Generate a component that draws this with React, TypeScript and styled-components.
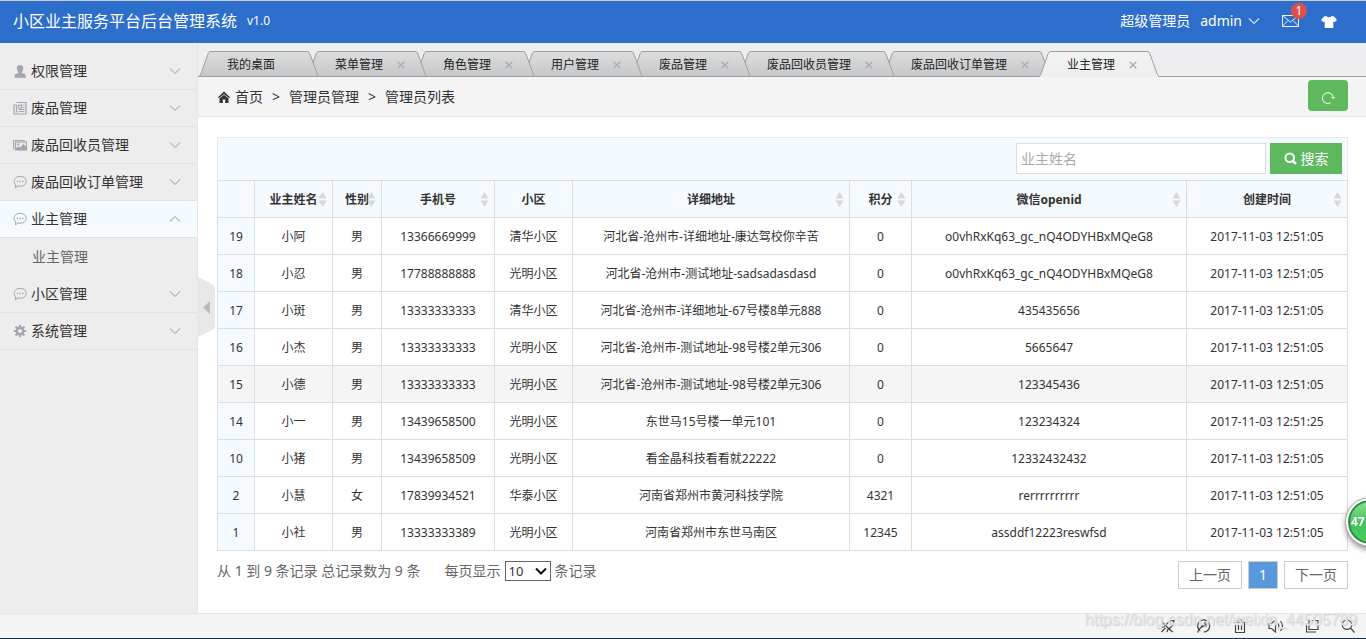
import React from 'react';
import styled, { createGlobalStyle } from 'styled-components';

const Global = createGlobalStyle`
  * { box-sizing: border-box; }
  html, body { margin: 0; padding: 0; }
  body, button, input, select {
    font-family: "Noto Sans", "Noto Sans CJK SC", sans-serif;
    font-size: 14px;
    line-height: 20px;
    color: #333;
  }
  button { padding: 0; border: 0; background: none; cursor: pointer; }
  a { color: inherit; text-decoration: none; }
  svg { display: block; flex: none; }
`;

const Page = styled.div`
  min-height: 100vh;
  display: flex;
  flex-direction: column;
  background: #fff;
`;

const Header = styled.header`
  height: 43px;
  padding: 0 29px 2px 13px;
  border-top: 1px solid #c9ccd0;
  background: #2d6dcc;
  color: #fff;
  display: flex;
  align-items: center;
  justify-content: space-between;
`;

const Brand = styled.h1`
  margin: 0;
  display: flex;
  align-items: center;
  gap: 10px;
  font-size: 16px;
  font-weight: 400;
`;

const Version = styled.small`
  font-size: 12px;
`;

const UserNav = styled.nav`
  display: flex;
  align-items: center;
  gap: 10px;
`;

const UserLink = styled.a`
  display: flex;
  align-items: center;
  gap: 6px;
`;

const MailLink = styled.a`
  position: relative;
  margin: 0 12px;
`;

const Badge = styled.span`
  position: absolute;
  left: 9px;
  top: -12px;
  width: 16px;
  height: 16px;
  border-radius: 8px;
  background: #dd514c;
  font-size: 12px;
  line-height: 16px;
  text-align: center;
`;

const Body = styled.div`
  flex: 1;
  display: flex;
`;

const Sidebar = styled.aside`
  flex: none;
  width: 198px;
  padding-top: 10px;
  border-right: 1px solid #e5e5e5;
  background: #ededed;
`;

const MenuButton = styled.button<{ $open?: boolean }>`
  width: 100%;
  height: 37px;
  padding: 0 16px 0 13px;
  display: flex;
  align-items: center;
  gap: 4px;
  border-bottom: 1px solid #e2e2e2;
  background: ${p => (p.$open ? '#f5faff' : 'transparent')};
  color: #333;
`;

const MenuText = styled.span`
  flex: 1;
  text-align: left;
`;

const SubLink = styled.a`
  display: block;
  height: 38px;
  padding-left: 32px;
  line-height: 38px;
  color: #666;
`;

const Main = styled.main`
  position: relative;
  flex: 1;
  min-width: 0;
`;

const Collapse = styled.button`
  position: absolute;
  left: 0;
  top: 234px;
  width: 17px;
  height: 61px;
`;

const TabBar = styled.div`
  height: 34px;
  padding: 8px 0 0 1px;
  display: flex;
  isolation: isolate;
  background: linear-gradient(#9c9fa2, #9c9fa2) bottom / 100% 1px no-repeat, #eeeef0;
`;

const Tab = styled.div<{ $z: number }>`
  position: relative;
  z-index: ${p => p.$z};
  display: flex;
  margin-right: -12px;
`;

const TabBody = styled.div<{ $active?: boolean }>`
  height: 26px;
  padding: ${p => (p.$active ? '0' : '1px')} 4px 0 16px;
  min-width: 96px;
  display: flex;
  align-items: center;
  gap: 10px;
  border-top: 1px solid #9c9fa2;
  border-bottom: ${p => (p.$active ? '0' : '1px solid #9c9fa2')};
  background: ${p => (p.$active ? 'linear-gradient(#f1f3f2, #eeeef0)' : 'linear-gradient(#dcdedd, #c6c7c9)')};
  font-size: 12px;
  color: #222;
`;

const Close = styled.button`
  width: 18px;
  height: 16px;
  padding-right: 2px;
  display: flex;
  align-items: center;
  justify-content: center;
`;

const Crumbs = styled.nav`
  height: 40px;
  padding: 0 18px 0 20px;
  display: flex;
  align-items: center;
  gap: 5px;
  border-bottom: 1px solid #e5e5e5;
  background: #f4f4f4;
`;

const CrumbSep = styled.span`
  width: 16px;
  text-align: center;
`;

const Refresh = styled.button`
  width: 40px;
  height: 31px;
  margin: 0 0 2px auto;
  padding-top: 4px;
  display: flex;
  align-items: center;
  justify-content: center;
  border-radius: 4px;
  background: #5eb95e;
`;

const Content = styled.section`
  padding: 20px 18px 24px 19px;
`;

const SearchBar = styled.form`
  height: 43px;
  padding: 0 5px 1px;
  display: flex;
  align-items: center;
  justify-content: flex-end;
  gap: 4px;
  border: 1px solid #e8ebed;
  border-bottom: 0;
  background: #f5faff;
`;

const SearchInput = styled.input`
  width: 250px;
  height: 31px;
  padding: 0 4px;
  border: 1px solid #ddd;
  border-radius: 0;
  background: #fff;
  &::placeholder { color: #aaa; opacity: 1; }
`;

const SearchButton = styled.button`
  width: 72px;
  height: 31px;
  display: flex;
  align-items: center;
  justify-content: center;
  gap: 4px;
  background: #5eb95e;
  color: #fff;
`;

const Table = styled.table`
  width: 100%;
  table-layout: fixed;
  border-collapse: collapse;
  font-size: 12px;
  text-align: center;
`;

const Col = styled.col<{ $w?: number }>`
  width: ${p => (p.$w ? p.$w + 'px' : 'auto')};
`;

const Th = styled.th`
  height: 37px;
  padding: 2px 0 0;
  border: 1px solid #ddd;
  background: #f5faff;
  font-weight: 700;
`;

const HeadCell = styled.div`
  position: relative;
`;

const SortIcon = styled.svg`
  position: absolute;
  right: 5px;
  top: 2px;
`;

const Td = styled.td<{ $tint?: boolean }>`
  height: 37px;
  padding: 2px 0 0;
  border: 1px solid #ddd;
  background: ${p => (p.$tint ? '#f5faff' : 'transparent')};
`;

const Row = styled.tr<{ $hover?: boolean }>`
  background: ${p => (p.$hover ? '#f5f5f5' : '#fff')};
  ${Td} { ${p => (p.$hover ? 'background: #f5f5f5;' : '')} }
`;

const TableFoot = styled.div`
  padding-top: 10px;
  display: flex;
  justify-content: space-between;
  color: #666;
`;

const Summary = styled.div`
  height: 20px;
  display: flex;
  align-items: center;
  gap: 24px;
`;

const PageSize = styled.label`
  display: flex;
  align-items: center;
  gap: 4px;
`;

const SizeBox = styled.span`
  position: relative;
  display: flex;
`;

const SizeSelect = styled.select`
  width: 46px;
  height: 20px;
  padding: 0 3px;
  border: 1px solid #666;
  border-radius: 0;
  background: #fff;
  appearance: none;
  font-size: 13px;
  line-height: 18px;
`;

const SelectArrow = styled.svg`
  position: absolute;
  right: 4px;
  top: 6px;
  pointer-events: none;
`;

const Pager = styled.nav`
  display: flex;
  gap: 6px;
`;

const PageButton = styled.button<{ $current?: boolean }>`
  height: 28px;
  padding: 0 10px;
  border: 1px solid #ccc;
  background: ${p => (p.$current ? '#5a98de' : '#fff')};
  color: ${p => (p.$current ? '#fff' : '#666')};
`;

const Footer = styled.footer`
  position: relative;
  height: 26px;
  padding: 0 10px;
  display: flex;
  align-items: center;
  justify-content: flex-end;
  gap: 20px;
  border-top: 1px solid #e5e5e5;
  border-bottom: 1px solid #1f2d3d;
  background: #f4f4f4;
`;

const ToolButton = styled.button`
  width: 16px;
  height: 16px;
`;

const Watermark = styled.span`
  position: absolute;
  right: 9px;
  top: -4px;
  font-family: "Liberation Sans", sans-serif;
  font-size: 16px;
  line-height: 20px;
  color: #e6e6e6;
  text-shadow: 1px 1px 1px #ccc;
`;

const Bubble = styled.div`
  position: fixed;
  right: -28px;
  top: 498px;
  width: 48px;
  height: 48px;
  padding-left: 3px;
  border: 2px solid #fff;
  border-radius: 50%;
  outline: 1px solid #aaa;
  box-shadow: inset 0 0 0 2px #2b8a4c, 0 3px 6px rgba(0, 0, 0, 0.5);
  background: linear-gradient(#8fe08f, #3fc35a 55%, #4fd05f);
  font-size: 12px;
  font-weight: 700;
  line-height: 44px;
  color: #fff;
`;

const ICON = '#a2a7b0';

const Chevron = ({ up, color = '#bbb' }: { up?: boolean; color?: string }) => (
  <svg width="12" height="8" viewBox="0 0 12 8" fill="none" stroke={color} strokeWidth="1.2">
    <path d={up ? 'M1 6.5 6 1.5 11 6.5' : 'M1 1.5 6 6.5 11 1.5'} />
  </svg>
);

const UserIcon = () => (
  <svg width="14" height="14" viewBox="0 0 14 14" fill={ICON}>
    <path d="M7 1c2.200 0 3.400 1.500 3.300 3.600C10.200 6.400 9.500 7.400 8.800 8.200c0 .7.500 1.100 1.700 1.300 1.700.3 2.300 1 2.400 4.200H1.600C1.700 10.500 2.200 9.800 3.900 9.500c1.200-.2 1.500-.6 1.500-1.300-.7-.8-1.400-1.800-1.500-3.600C3.800 2.500 4.800 1 7 1z" />
  </svg>
);

const NewsIcon = () => (
  <svg width="14" height="14" viewBox="0 0 14 14" fill="none" stroke={ICON} strokeWidth="1.200">
    <path d="M3.500 1.500h9.500v11.500h-12v-9h2.500M3.500 4v7.500" />
    <path d="M5.500 4h3v3h-3zM9.500 4h2M9.500 6.500h2M5.500 8.500h6M5.500 10.500h6" />
  </svg>
);

const ImageIcon = () => (
  <svg width="14" height="14" viewBox="0 0 14 14" fill="none" stroke={ICON}>
    <path d="M.5 11.500v-9h11" />
    <rect x="2.500" y="4" width="11" height="8" strokeWidth="1.200" />
    <circle cx="5.300" cy="6.400" r="1.100" fill={ICON} stroke="none" />
    <path d="M3 11.500V10L5.500 8.500l1.500 1L10.300 6 13.500 9v3H3z" fill={ICON} stroke="none" />
  </svg>
);

const ChatIcon = () => (
  <svg width="14" height="14" viewBox="0 0 14 14" fill="none" stroke={ICON}>
    <path d="M7.300 1.300c3.500 0 5.900 2.100 5.900 5s-2.400 5-5.900 5c-.8 0-1.600-.1-2.300-.4L2.400 13l.4-3C1.700 9 1.100 7.700 1.100 6.300c0-2.900 2.700-5 6.200-5z" />
    <path d="M4 6.500h1.300M6.600 6.500h1.300M9.200 6.500h1.300" strokeWidth="1.300" />
  </svg>
);

const GearIcon = () => (
  <svg width="14" height="14" viewBox="0 0 14 14" fill="none" stroke={ICON}>
    <circle cx="7" cy="7" r="3.200" strokeWidth="2.400" />
    <path d="M7 .8v2.400M7 10.800v2.400M.8 7h2.400M10.800 7h2.400M2.600 2.600l1.700 1.700M9.700 9.700l1.700 1.700M11.400 2.600 9.700 4.300M4.300 9.700l-1.700 1.700" strokeWidth="2.200" />
  </svg>
);

const menus = [
  { label: '权限管理', icon: <UserIcon /> },
  { label: '废品管理', icon: <NewsIcon /> },
  { label: '废品回收员管理', icon: <ImageIcon /> },
  { label: '废品回收订单管理', icon: <ChatIcon /> },
  { label: '业主管理', icon: <ChatIcon />, sub: '业主管理' },
  { label: '小区管理', icon: <ChatIcon /> },
  { label: '系统管理', icon: <GearIcon /> },
];

const tabs = ['我的桌面', '菜单管理', '角色管理', '用户管理', '废品管理', '废品回收员管理', '废品回收订单管理', '业主管理'];

const TabCap = ({ id, active, right }: { id: string; active: boolean; right?: boolean }) => (
  <svg width="12" height="26" viewBox="0 0 12 26">
    <defs>
      <linearGradient id={id} x1="0" y1="0" x2="0" y2="1">
        <stop offset="0" stopColor={active ? '#f1f3f2' : '#dcdedd'} />
        <stop offset="1" stopColor={active ? '#eeeef0' : '#c6c7c9'} />
      </linearGradient>
    </defs>
    <g transform={right ? 'translate(12 0) scale(-1 1)' : undefined}>
      <path d="M12 .5C10.500.5 9.500 1.500 9 3L2 22.500Q1.300 25 0 25.500V26H12z" fill={`url(#${id})`} />
      <path d="M12 .5C10.500.5 9.500 1.500 9 3L2 22.500Q1.300 25 0 25.500" fill="none" stroke="#9c9fa2" />
      {!active && <path d="M0 25.500H12" stroke="#9c9fa2" />}
    </g>
  </svg>
);

const columns = [
  { label: '', w: 37 },
  { label: '业主姓名', w: 78, sort: true },
  { label: '性别', w: 49, sort: true },
  { label: '手机号', w: 113, sort: true },
  { label: '小区', w: 78 },
  { label: '详细地址', sort: true },
  { label: '积分', w: 62, sort: true },
  { label: '微信openid', w: 275, sort: true },
  { label: '创建时间', w: 161, sort: true },
];

const rows = [
  ['19', '小阿', '男', '13366669999', '清华小区', '河北省-沧州市-详细地址-康达驾校你辛苦', '0', 'o0vhRxKq63_gc_nQ4ODYHBxMQeG8', '2017-11-03 12:51:05'],
  ['18', '小忍', '男', '17788888888', '光明小区', '河北省-沧州市-测试地址-sadsadasdasd', '0', 'o0vhRxKq63_gc_nQ4ODYHBxMQeG8', '2017-11-03 12:51:05'],
  ['17', '小斑', '男', '13333333333', '清华小区', '河北省-沧州市-详细地址-67号楼8单元888', '0', '435435656', '2017-11-03 12:51:05'],
  ['16', '小杰', '男', '13333333333', '光明小区', '河北省-沧州市-测试地址-98号楼2单元306', '0', '5665647', '2017-11-03 12:51:05'],
  ['15', '小德', '男', '13333333333', '光明小区', '河北省-沧州市-测试地址-98号楼2单元306', '0', '123345436', '2017-11-03 12:51:05'],
  ['14', '小一', '男', '13439658500', '光明小区', '东世马15号楼一单元101', '0', '123234324', '2017-11-03 12:51:25'],
  ['10', '小猪', '男', '13439658509', '光明小区', '看金晶科技看看就22222', '0', '12332432432', '2017-11-03 12:51:05'],
  ['2', '小慧', '女', '17839934521', '华泰小区', '河南省郑州市黄河科技学院', '4321', 'rerrrrrrrrrr', '2017-11-03 12:51:05'],
  ['1', '小社', '男', '13333333389', '光明小区', '河南省郑州市东世马南区', '12345', 'assddf12223reswfsd', '2017-11-03 12:51:05'],
];

const tools = [
  { name: '加速', d: 'M1.500 14 5.500 10M4 6l6 6M6 8c1-3.500 3.500-5.500 8-5.500C14 6 12 9 8.500 10.500M6.500 6H4L2 3.500M10 9.500v2.500l3 2M10 6l1-1M2 9.500 5 8.500M7 14l1-3' },
  { name: '修复', d: 'M4.200 12.800A6 6 0 1 1 13.700 8a6 6 0 0 1-6 6M1.500 14.500C3 10.500 7 7 13 5M6 9.500 9.500 4M5 8h6' },
  { name: '清理', d: 'M1.500 4.500h13M5.500 4.500v-2.500h5v2.500M3.500 4.500v10h9V4.500M6.500 7v5M9.500 7v5' },
  { name: '声音', d: 'M1 5.500v5h2.500L7.500 14V2L3.500 5.500zM10 5.500q1.700 2.500 0 5M12.500 3q4 5 0 10' },
  { name: '窗口', d: 'M5 2.500h9v9H5zM2.500 5v9h9.500' },
  { name: '缩放', d: 'M7 2a4.700 4.700 0 1 1 0 9.400A4.700 4.700 0 0 1 7 2zM10.500 10 14.500 14.500' },
];

export default function App() {
  return (
    <Page>
      <Global />
      <Header>
        <Brand>小区业主服务平台后台管理系统 <Version>v1.0</Version></Brand>
        <UserNav>
          <span>超级管理员</span>
          <UserLink href="#user">admin <Chevron color="#d5e2f5" /></UserLink>
          <MailLink href="#mail" aria-label="消息">
            <svg width="17" height="12" viewBox="0 0 17 12" fill="none" stroke="#fff">
              <path d="M.5.500h16v11H.5zM.5.500 8.500 7 16.500.5M.5 11 6 5.500M16.500 11 11 5.500" strokeWidth=".9" />
            </svg>
            <Badge>1</Badge>
          </MailLink>
          <a href="#skin" aria-label="换肤">
            <svg width="16" height="13" viewBox="0 0 16 13" fill="#fff">
              <path d="M5 1Q8 3.500 11 1L13 1.500 16 5 13.500 7.200 12.300 6.200V13H3.700V6.200L2.500 7.200 0 5 3 1.500z" />
            </svg>
          </a>
        </UserNav>
      </Header>
      <Body>
        <Sidebar>
          {menus.map(m => (
            <React.Fragment key={m.label}>
              <MenuButton $open={!!m.sub}>
                {m.icon}
                <MenuText>{m.label}</MenuText>
                <Chevron up={!!m.sub} />
              </MenuButton>
              {m.sub && <SubLink href="#owners">{m.sub}</SubLink>}
            </React.Fragment>
          ))}
        </Sidebar>
        <Main>
          <TabBar>
            {tabs.map((t, i) => {
              const active = i === tabs.length - 1;
              return (
                <Tab key={t} $z={active ? 20 : 10 - i}>
                  <TabCap id={`l${i}`} active={active} />
                  <TabBody $active={active}>
                    <span>{t}</span>
                    {i > 0 && (
                      <Close aria-label="关闭">
                        <svg width="8" height="8" viewBox="0 0 8 8" stroke="#a9adb3" strokeWidth="1.400">
                          <path d="M.7.700 7.300 7.300M7.300.700.7 7.300" />
                        </svg>
                      </Close>
                    )}
                  </TabBody>
                  <TabCap id={`r${i}`} active={active} right />
                </Tab>
              );
            })}
          </TabBar>
          <Crumbs>
            <svg width="12" height="12" viewBox="0 0 12 12" fill="#333">
              <path d="M6 .5 12 6.200l-.9 1.100L6 2.900.9 7.300 0 6.200z" />
              <path d="M6 3.700 10.500 7.600V12H7.200V8.500H4.800V12H1.500V7.600z" />
            </svg>
            <a href="#home">首页</a>
            <CrumbSep>&gt;</CrumbSep>
            <span>管理员管理</span>
            <CrumbSep>&gt;</CrumbSep>
            <span>管理员列表</span>
            <Refresh aria-label="刷新">
              <svg width="14" height="14" viewBox="0 0 14 14" fill="none" stroke="#fff">
                <path d="M9.500 11.800A5.400 5.400 0 1 1 12.200 7" />
                <path d="M10.500 6 12.200 7.700 13.800 6" />
              </svg>
            </Refresh>
          </Crumbs>
          <Content>
            <SearchBar>
              <SearchInput aria-label="业主姓名" placeholder="业主姓名" />
              <SearchButton type="button">
                <svg width="13" height="13" viewBox="0 0 13 13" fill="none" stroke="#fff" strokeWidth="2">
                  <circle cx="5.700" cy="5.700" r="4.300" />
                  <path d="M8.800 8.800 12 12" strokeWidth="2.400" />
                </svg>
                搜索
              </SearchButton>
            </SearchBar>
            <Table>
              <colgroup>{columns.map((c, i) => <Col key={i} $w={c.w} />)}</colgroup>
              <thead>
                <tr>
                  {columns.map((c, i) => (
                    <Th key={i} scope="col">
                      <HeadCell>
                        {c.label}
                        {c.sort && (
                          <SortIcon width="9" height="15" viewBox="0 0 9 15" fill="#d8d8d8">
                            <path d="M4.500 0 8.500 6.500H.5zM.5 8.500h8L4.500 15z" />
                          </SortIcon>
                        )}
                      </HeadCell>
                    </Th>
                  ))}
                </tr>
              </thead>
              <tbody>
                {rows.map(r => (
                  <Row key={r[0]} $hover={r[0] === '15'}>
                    {r.map((v, i) => <Td key={i} $tint={i === 0}>{v}</Td>)}
                  </Row>
                ))}
              </tbody>
            </Table>
            <TableFoot>
              <Summary>
                <span>从 1 到 9 条记录 总记录数为 9 条</span>
                <PageSize>
                  每页显示
                  <SizeBox>
                    <SizeSelect defaultValue="10"><option>10</option><option>25</option></SizeSelect>
                    <SelectArrow width="12" height="8" viewBox="0 0 12 8" fill="none" stroke="#111" strokeWidth="2">
                      <path d="M1 1.500 6 6.500 11 1.500" />
                    </SelectArrow>
                  </SizeBox>
                  条记录
                </PageSize>
              </Summary>
              <Pager>
                <PageButton>上一页</PageButton>
                <PageButton $current>1</PageButton>
                <PageButton>下一页</PageButton>
              </Pager>
            </TableFoot>
          </Content>
          <Collapse aria-label="收起菜单">
            <svg width="17" height="61" viewBox="0 0 17 61">
              <path d="M0 0 14 7Q17 8.500 17 11V49Q17 51.500 14 53L0 60z" fill="#e8e8e8" />
              <path d="M12 24v13L5 30.500z" fill="#bbb" />
            </svg>
          </Collapse>
        </Main>
      </Body>
      <Footer>
        {tools.map(t => (
          <ToolButton key={t.name} aria-label={t.name}>
            <svg width="16" height="16" viewBox="0 0 16 16" fill="none" stroke="#444" strokeWidth="1.200"><path d={t.d} /></svg>
          </ToolButton>
        ))}
        <Watermark>https://blog.csdn.net/weixin_44505789</Watermark>
      </Footer>
      <Bubble>47</Bubble>
    </Page>
  );
}
